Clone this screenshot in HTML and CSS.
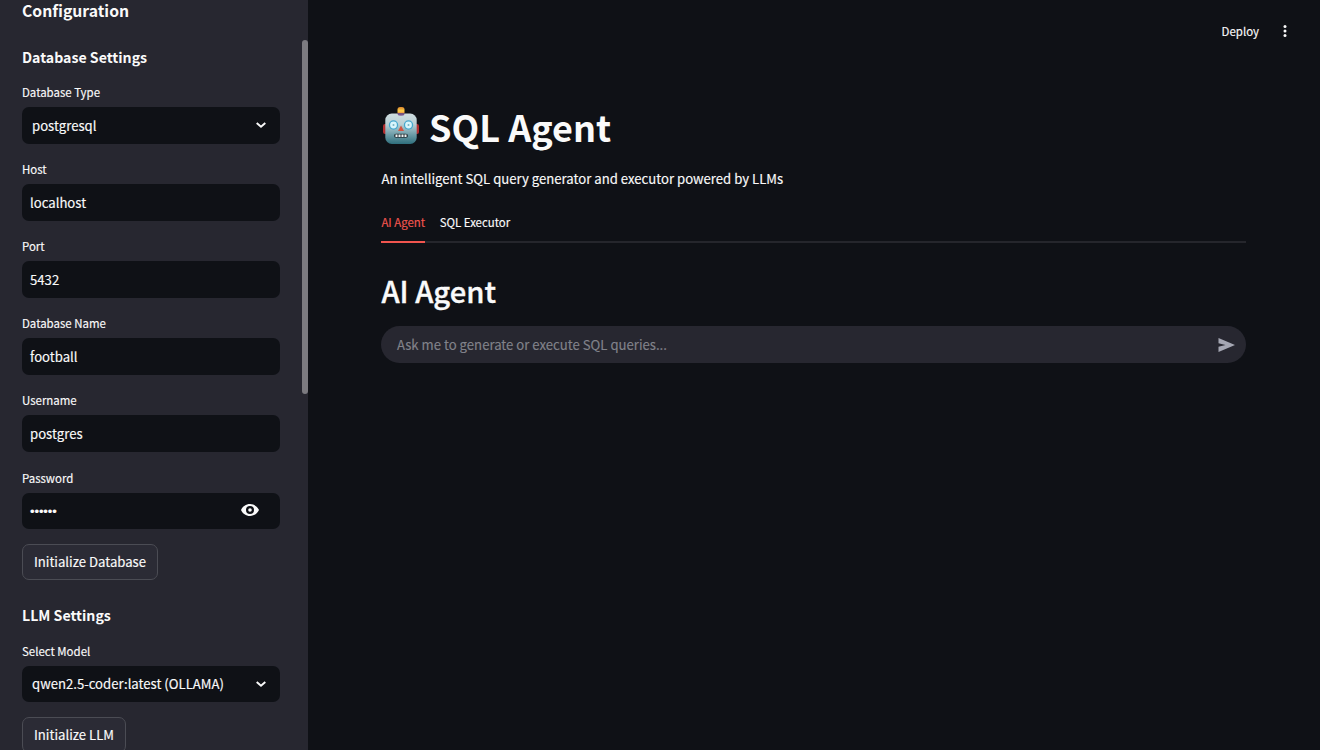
FILE: index.html
```html
<!DOCTYPE html>
<html lang="en">
<head>
<meta charset="utf-8">
<title>SQL Agent</title>
<link rel="stylesheet" href="styles.css">
</head>
<body>
<div class="app">
  <aside class="sidebar">
    <div class="sidebar-content">
      <h2 class="side-title">Configuration</h2>
      <h3 class="side-heading">Database Settings</h3>
      <div class="field"><span class="label">Database Type</span>
        <div class="box select"><span>postgresql</span><svg class="chevron" viewBox="0 0 12 12"><path d="M1.7 4l4.3 3.8L10.3 4"/></svg></div></div>
      <div class="field"><span class="label">Host</span><div class="box"><span>localhost</span></div></div>
      <div class="field"><span class="label">Port</span><div class="box"><span>5432</span></div></div>
      <div class="field"><span class="label">Database Name</span><div class="box"><span>football</span></div></div>
      <div class="field"><span class="label">Username</span><div class="box"><span>postgres</span></div></div>
      <div class="field"><span class="label">Password</span>
        <div class="box password"><span class="dots">••••••</span><svg class="eye" viewBox="0 0 18 12"><path fill-rule="evenodd" d="M9 0C5 0 1.6 2.5 0 6c1.6 3.5 5 6 9 6s7.400-2.500 9-6C16.400 2.500 13 0 9 0zM9 10a4 4 0 1 1 0-8 4 4 0 0 1 0 8zM9 4.200a1.800 1.800 0 1 0 0 3.600 1.800 1.800 0 0 0 0-3.600z"/></svg></div></div>
      <button class="button b-db"><span>Initialize Database</span></button>
      <h3 class="side-heading llm">LLM Settings</h3>
      <div class="field"><span class="label">Select Model</span>
        <div class="box select"><span>qwen2.5-coder:latest (OLLAMA)</span><svg class="chevron" viewBox="0 0 12 12"><path d="M1.7 4l4.3 3.8L10.3 4"/></svg></div></div>
      <button class="button b-llm"><span>Initialize LLM</span></button>
    </div>
    <div class="scrollbar"></div>
  </aside>
  <main class="main">
    <header class="toolbar"><span class="deploy">Deploy</span>
      <svg class="kebab" viewBox="0 0 4 14"><circle cx="2" cy="2.500" r="1.500"/><circle cx="2" cy="7" r="1.500"/><circle cx="2" cy="11.500" r="1.500"/></svg></header>
    <section class="content">
      <h1 class="title">
        <svg class="robot" viewBox="0 0 38 40">
          <defs>
            <linearGradient id="face" x1="0" y1="0" x2="0" y2="1"><stop offset="0" stop-color="#cfdde0"/><stop offset=".35" stop-color="#b9d0d5"/><stop offset=".7" stop-color="#6b9ba6"/><stop offset="1" stop-color="#2f6f7d"/></linearGradient>
            <linearGradient id="bulb" x1="0" y1="0" x2="0" y2="1"><stop offset="0" stop-color="#d9822b"/><stop offset=".45" stop-color="#ffd34a"/><stop offset=".65" stop-color="#f0a040"/><stop offset=".75" stop-color="#6a4a80"/><stop offset="1" stop-color="#8b6b9a"/></linearGradient>
          </defs>
          <rect x="1" y="18" width="5" height="10" rx="2" fill="#b52d2f"/>
          <rect x="32" y="18" width="5" height="10" rx="2" fill="#b52d2f"/>
          <rect x="3.300" y="7.500" width="31.400" height="30.500" rx="6.500" fill="url(#face)"/>
          <rect x="15.500" y="1" width="7" height="8.800" rx="2.500" fill="url(#bulb)"/>
          <circle cx="11.500" cy="19" r="4.700" fill="#45a7ce"/><circle cx="26.500" cy="19" r="4.700" fill="#45a7ce"/>
          <circle cx="11.500" cy="19" r="3.400" fill="#d9f5fb"/><circle cx="26.500" cy="19" r="3.400" fill="#d9f5fb"/>
          <circle cx="11.500" cy="19" r="1" fill="#77b3c4"/><circle cx="26.500" cy="19" r="1" fill="#77b3c4"/>
          <path d="M19 19.500l3 5.500h-6z" fill="#d35443"/>
          <rect x="12" y="27.800" width="14" height="4" rx="2" fill="#26343a"/>
          <path d="M13.500 29.800h11" stroke="#f1f3f2" stroke-width="2.400" stroke-dasharray="2 1"/>
        </svg>
        <span>SQL Agent</span></h1>
      <p class="intro"><span>An intelligent SQL query generator and executor powered by LLMs</span></p>
      <nav class="tabs"><span class="tab active">AI Agent</span><span class="tab">SQL Executor</span></nav>
      <h2 class="section-title"><span>AI Agent</span></h2>
      <div class="chat"><span>Ask me to generate or execute SQL queries...</span>
        <svg class="send" viewBox="0 0 17 14"><path d="M.5 0L17 7 .5 14V8.700L7.500 7 .5 5.300z"/></svg></div>
    </section>
  </main>
</div>
</body>
</html>
```
FILE: styles.css
```css
* { box-sizing: border-box; }
body {
  margin: 0;
  background: #0f1116;
  color: #fafafa;
  font-family: "Noto Sans CJK SC", "Noto Sans", sans-serif;
  font-size: 13.150px;
  -webkit-text-stroke: 0.150px currentColor;
}
h1, h2, h3, p { margin: 0; }
h1, h3 { -webkit-text-stroke-width: 0; }
span { white-space: nowrap; }
svg { display: block; flex: none; }
.app { display: flex; width: 1320px; height: 750px; overflow: hidden; }
.sidebar { display: flex; justify-content: space-between; width: 308px; height: 750px; flex: none; background: #272730; overflow: hidden; }
.sidebar-content { display: flex; flex-direction: column; align-items: flex-start; width: 281px; padding-left: 22px; }
.side-title { height: 22px; line-height: 22px; font-size: 15.750px; font-weight: 700; -webkit-text-stroke-width: 0; }
.side-heading { height: 24px; line-height: 24px; margin-top: 23px; margin-bottom: 11.300px; font-size: 14.150px; font-weight: 700; }
.side-heading.llm { margin-top: 22.800px; margin-bottom: 11.700px; }
.field { width: 258.400px; margin-bottom: 14.600px; }
.label { display: block; height: 26px; line-height: 22.600px; font-size: 11.450px; }
.side-heading + .field .label { height: 26.800px; line-height: 24px; }
.box { display: flex; align-items: center; height: 36.500px; padding: 1px 8px 0; border-radius: 7px; background: #0f1116; line-height: 20px; }
.select { justify-content: space-between; padding: 1px 13.400px 0 10px; }
.password { justify-content: space-between; padding: 0 21.500px 0 8px; }
.chevron { width: 12px; height: 12px; margin-top: -1px; fill: none; stroke: #fafafa; stroke-width: 1.900; }
.eye { width: 18px; height: 12px; margin-top: -1px; fill: #fafafa; }
.dots { padding-top: 2px; font-family: "Liberation Sans", sans-serif; font-size: 13px; letter-spacing: -0.100px; -webkit-text-stroke-width: 0.150px; }
.button { height: 36.600px; padding: 0; border: 1px solid #4b4c54; border-radius: 7px; background: #2b2b35; color: #fafafa; font: inherit; line-height: 20px; text-align: center; flex: none; }
.b-db { width: 136px; }
.b-llm { width: 104px; }
.scrollbar { width: 6px; height: 354px; margin-top: 40.300px; border-radius: 3px; background: #7c7b80; }
.main { flex: 1; }
.toolbar { display: flex; align-items: center; justify-content: flex-end; gap: 24px; height: 62px; padding-right: 33px; font-size: 11.450px; line-height: 20px; }
.kebab { width: 4px; height: 14px; fill: #fafafa; }
.content { width: 938.400px; padding: 37px 0 0 73.400px; }
.title { display: flex; align-items: center; height: 54px; gap: 9px; padding-left: .6px; font-size: 36px; font-weight: 700; line-height: 50px; }
.robot { width: 38px; height: 40px; margin-top: -1px; }
.intro { height: 24px; margin-top: 13.500px; line-height: 24px; }
.tabs { display: flex; gap: 14.600px; height: 37px; margin-top: 15.500px; border-bottom: 2px solid #25262c; font-size: 11.450px; line-height: 32px; }
.tab { height: 37px; }
.tab.active { color: #f1554f; border-bottom: 2px solid #f1554f; }
.section-title { height: 40px; margin-top: 27px; font-size: 29.200px; font-weight: 500; line-height: 40px; -webkit-text-stroke-width: 0.350px; }
.chat { display: flex; align-items: center; justify-content: space-between; height: 36.400px; margin-top: 16.400px; padding: 0 11px 0 15.500px; border-radius: 19px; background: #272730; color: #81828a; line-height: 20px; }
.send { width: 17px; height: 14px; fill: #a5a7b3; }
```
